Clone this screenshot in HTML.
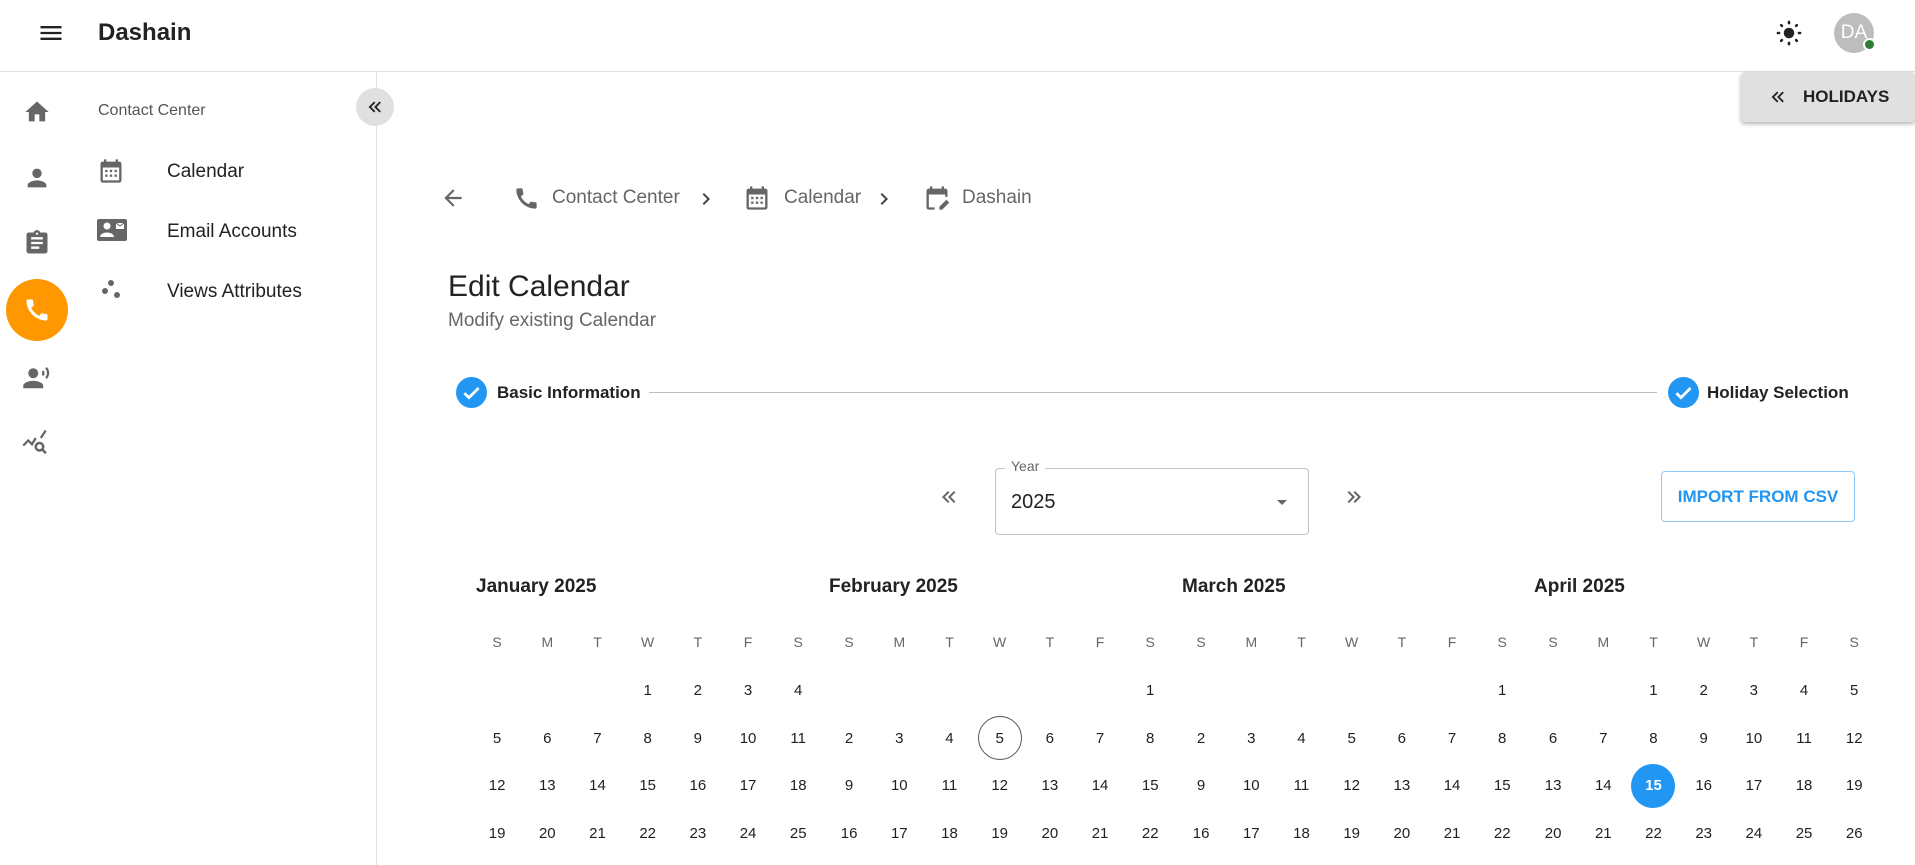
<!DOCTYPE html>
<html><head><meta charset="utf-8"><style>
*{box-sizing:border-box;margin:0;padding:0}
body{width:1915px;height:865px;overflow:hidden;background:#fff;font-family:"Liberation Sans",sans-serif;color:#212121;position:relative}
.a{position:absolute}
svg{display:block}
.cal{position:absolute;top:617px;width:352px;display:grid;grid-template-columns:repeat(7,50.2px);grid-template-rows:50px repeat(4,47.6px);font-size:15px;text-align:center}
.cal div{display:flex;align-items:center;justify-content:center}
.cal .h{color:#666;font-size:14px}
.mt{position:absolute;top:576px;font-size:19px;font-weight:bold;color:#222}
.sel span{width:44px;height:44px;border-radius:50%;background:#2196f3;color:#fff;font-weight:bold;display:flex;align-items:center;justify-content:center}
.today span{width:44px;height:44px;border-radius:50%;border:1px solid #555;display:flex;align-items:center;justify-content:center}
</style></head><body>
<div class="a" style="left:0;top:71px;width:1915px;height:1px;background:#e0e0e0"></div>
<svg class="a" style="left:37px;top:19px" width="28" height="28" viewBox="0 0 24 24"><path d="M3 18h18v-2H3v2zm0-5h18v-2H3v2zm0-7v2h18V6H3z" fill="#222"/></svg>
<div class="a" style="left:98px;top:19px;font-size:24px;font-weight:bold;color:#222">Dashain</div>
<svg class="a" style="left:1775px;top:19px" width="28" height="28" viewBox="0 0 24 24"><circle cx="12" cy="12" r="4.5" fill="#222"/><g stroke="#222" stroke-width="2.2" stroke-linecap="round"><path d="M12 2.5v1M12 20.5v1M2.5 12h1M20.5 12h1M5.3 5.3l.6.6M18.1 18.1l.6.6M5.3 18.7l.6-.6M18.1 5.9l.6-.6"/></g></svg>
<div class="a" style="left:1834px;top:13px;width:40px;height:40px;border-radius:50%;background:#bdbdbd;color:#fff;font-size:19px;display:flex;align-items:center;justify-content:center">DA</div>
<div class="a" style="left:1863px;top:38px;width:13px;height:13px;border-radius:50%;background:#2e7d32;border:2px solid #fff"></div>
<div class="a" style="left:1741px;top:72px;width:174px;height:50px;background:#e0e0e0;border-radius:4px;box-shadow:0 2px 4px rgba(0,0,0,.3);display:flex;align-items:center"><svg style="margin-left:26px" width="22" height="22" viewBox="0 0 24 24"><path d="M18.41 16.59L13.82 12l4.59-4.59L17 6l-6 6 6 6zM11 18l1.41-1.41L7.83 12l4.58-4.59L11 6l-6 6z" fill="#222"/></svg><span style="margin-left:14px;font-size:17px;font-weight:bold;color:#222">HOLIDAYS</span></div>
<svg class="a" style="left:23px;top:98px" width="28" height="28" viewBox="0 0 24 24"><path d="M10 20v-6h4v6h5v-8h3L12 3 2 12h3v8z" fill="#666"/></svg>
<svg class="a" style="left:23px;top:164px" width="28" height="28" viewBox="0 0 24 24"><path d="M12 12c2.21 0 4-1.79 4-4s-1.79-4-4-4-4 1.79-4 4 1.79 4 4 4zm0 2c-2.67 0-8 1.34-8 4v2h16v-2c0-2.66-5.33-4-8-4z" fill="#666"/></svg>
<svg class="a" style="left:23px;top:229px" width="28" height="28" viewBox="0 0 24 24"><path d="M19 3h-4.18C14.4 1.84 13.3 1 12 1c-1.3 0-2.4.84-2.82 2H5c-1.1 0-2 .9-2 2v14c0 1.1.9 2 2 2h14c1.1 0 2-.9 2-2V5c0-1.1-.9-2-2-2zm-7 0c.55 0 1 .45 1 1s-.45 1-1 1-1-.45-1-1 .45-1 1-1zm2 14H7v-2h7v2zm3-4H7v-2h10v2zm0-4H7V7h10v2z" fill="#666"/></svg>
<div class="a" style="left:6px;top:279px;width:62px;height:62px;border-radius:50%;background:#ff9800"></div>
<svg class="a" style="left:23px;top:296px" width="28" height="28" viewBox="0 0 24 24"><path d="M20.01 15.38c-1.23 0-2.42-.2-3.53-.56-.35-.12-.74-.03-1.01.24l-1.57 1.97c-2.83-1.35-5.48-3.9-6.89-6.83l1.95-1.66c.27-.28.35-.67.24-1.02-.37-1.11-.56-2.3-.56-3.53 0-.54-.45-.99-.99-.99H4.19C3.65 3 3 3.24 3 3.99 3 13.28 10.73 21 20.01 21c.71 0 .99-.63.99-1.18v-3.45c0-.54-.45-.99-.99-.99z" fill="#fff"/></svg>
<svg class="a" style="left:22px;top:362px" width="30" height="30" viewBox="0 0 24 24"><circle cx="9" cy="9" r="4" fill="#666"/><path d="M9 15c-2.67 0-8 1.34-8 4v2h16v-2c0-2.66-5.33-4-8-4z" fill="#666"/><path d="M16.5 7.2c.8 1.1.8 2.5 0 3.6M19.2 4.6c2.2 2.4 2.2 6 0 8.3" stroke="#666" stroke-width="1.8" fill="none"/></svg>
<svg class="a" style="left:22px;top:428px" width="30" height="30" viewBox="0 0 24 24"><path d="M1 14l4-4 3 3 3-5M15 8l4-6" stroke="#666" stroke-width="1.8" fill="none"/><circle cx="14" cy="15" r="3" stroke="#666" stroke-width="2" fill="none"/><path d="M16.2 17.2l3 3" stroke="#666" stroke-width="2"/></svg>
<div class="a" style="left:376px;top:72px;width:1px;height:793px;background:#e0e0e0"></div>
<div class="a" style="left:356px;top:88px;width:38px;height:38px;border-radius:50%;background:#e0e0e0;display:flex;align-items:center;justify-content:center"><svg width="22" height="22" viewBox="0 0 24 24"><path d="M18.41 16.59L13.82 12l4.59-4.59L17 6l-6 6 6 6zM11 18l1.41-1.41L7.83 12l4.58-4.59L11 6l-6 6z" fill="#222"/></svg></div>
<div class="a" style="left:98px;top:102px;font-size:16px;color:#555">Contact Center</div>
<svg class="a" style="left:97px;top:157px" width="28" height="28" viewBox="0 0 24 24"><path d="M19 4h-1V2h-2v2H8V2H6v2H5c-1.1 0-2 .9-2 2v14c0 1.1.9 2 2 2h14c1.1 0 2-.9 2-2V6c0-1.1-.9-2-2-2zm0 16H5V9h14v11z" fill="#666"/><g fill="#666"><rect x="7" y="11" width="2" height="2"/><rect x="11" y="11" width="2" height="2"/><rect x="15" y="11" width="2" height="2"/><rect x="7" y="15" width="2" height="2"/><rect x="11" y="15" width="2" height="2"/><rect x="15" y="15" width="2" height="2"/></g></svg>
<div class="a" style="left:167px;top:161px;font-size:19px;color:#222">Calendar</div>
<svg class="a" style="left:96px;top:216px" width="32" height="28" viewBox="0 0 32 24"><rect x="1" y="1" width="30" height="22" rx="2" fill="#666"/><circle cx="11" cy="8" r="3.5" fill="#fff"/><path d="M4 19c0-3 4-4.5 7-4.5s7 1.5 7 4.5z" fill="#fff"/><rect x="20" y="5" width="8" height="6" fill="#fff"/><path d="M20 5l4 3 4-3" stroke="#666" fill="none"/></svg>
<div class="a" style="left:167px;top:221px;font-size:19px;color:#222">Email Accounts</div>
<svg class="a" style="left:100px;top:279px" width="24" height="24" viewBox="0 0 24 24"><circle cx="11" cy="4" r="3" fill="#666"/><circle cx="5" cy="12" r="3" fill="#666"/><circle cx="17" cy="16" r="3" fill="#666"/></svg>
<div class="a" style="left:167px;top:281px;font-size:19px;color:#222">Views Attributes</div>
<svg class="a" style="left:440px;top:185px" width="26" height="26" viewBox="0 0 24 24"><path d="M20 11H7.83l5.59-5.59L12 4l-8 8 8 8 1.41-1.41L7.83 13H20v-2z" fill="#666"/></svg>
<svg class="a" style="left:513px;top:185px" width="27" height="27" viewBox="0 0 24 24"><path d="M20.01 15.38c-1.23 0-2.42-.2-3.53-.56-.35-.12-.74-.03-1.01.24l-1.57 1.97c-2.83-1.35-5.48-3.9-6.89-6.83l1.95-1.66c.27-.28.35-.67.24-1.02-.37-1.11-.56-2.3-.56-3.53 0-.54-.45-.99-.99-.99H4.19C3.65 3 3 3.24 3 3.99 3 13.28 10.73 21 20.01 21c.71 0 .99-.63.99-1.18v-3.45c0-.54-.45-.99-.99-.99z" fill="#666"/></svg>
<div class="a" style="left:552px;top:187px;font-size:19px;color:#666">Contact Center</div>
<svg class="a" style="left:694px;top:187px" width="24" height="24" viewBox="0 0 24 24"><path d="M10 6L8.59 7.41 13.17 12l-4.58 4.59L10 18l6-6z" fill="#444"/></svg>
<svg class="a" style="left:743px;top:184px" width="28" height="28" viewBox="0 0 24 24"><path d="M19 4h-1V2h-2v2H8V2H6v2H5c-1.1 0-2 .9-2 2v14c0 1.1.9 2 2 2h14c1.1 0 2-.9 2-2V6c0-1.1-.9-2-2-2zm0 16H5V9h14v11z" fill="#666"/><g fill="#666"><rect x="7" y="11" width="2" height="2"/><rect x="11" y="11" width="2" height="2"/><rect x="15" y="11" width="2" height="2"/><rect x="7" y="15" width="2" height="2"/><rect x="11" y="15" width="2" height="2"/><rect x="15" y="15" width="2" height="2"/></g></svg>
<div class="a" style="left:784px;top:187px;font-size:19px;color:#666">Calendar</div>
<svg class="a" style="left:872px;top:187px" width="24" height="24" viewBox="0 0 24 24"><path d="M10 6L8.59 7.41 13.17 12l-4.58 4.59L10 18l6-6z" fill="#444"/></svg>
<svg class="a" style="left:923px;top:184px" width="28" height="28" viewBox="0 0 24 24"><path d="M5 22c-1.1 0-2-.9-2-2V6c0-1.1.9-2 2-2h1V2h2v2h8V2h2v2h1c1.1 0 2 .9 2 2v5h-2V9H5v11h5v2z" fill="#666"/><path d="M14 22v-2.5l6-6 2.5 2.5-6 6z" fill="#666"/></svg>
<div class="a" style="left:962px;top:187px;font-size:19px;color:#666">Dashain</div>
<div class="a" style="left:448px;top:270px;font-size:30px;color:#222">Edit Calendar</div>
<div class="a" style="left:448px;top:310px;font-size:19px;color:#666">Modify existing Calendar</div>
<svg class="a" style="left:456px;top:377px" width="31" height="31" viewBox="0 0 24 24"><circle cx="12" cy="12" r="12" fill="#2196f3"/><path d="M6.5 12.5l3.5 3.5 7.5-7.5" stroke="#fff" stroke-width="2.2" fill="none"/></svg>
<div class="a" style="left:497px;top:383px;font-size:17px;font-weight:bold;color:#222">Basic Information</div>
<div class="a" style="left:649px;top:392px;width:1008px;height:1px;background:#bdbdbd"></div>
<svg class="a" style="left:1668px;top:377px" width="31" height="31" viewBox="0 0 24 24"><circle cx="12" cy="12" r="12" fill="#2196f3"/><path d="M6.5 12.5l3.5 3.5 7.5-7.5" stroke="#fff" stroke-width="2.2" fill="none"/></svg>
<div class="a" style="left:1707px;top:383px;font-size:17px;font-weight:bold;color:#222">Holiday Selection</div>
<svg class="a" style="left:937px;top:485px" width="24" height="24" viewBox="0 0 24 24"><path d="M18.41 16.59L13.82 12l4.59-4.59L17 6l-6 6 6 6zM11 18l1.41-1.41L7.83 12l4.58-4.59L11 6l-6 6z" fill="#666"/></svg>
<div class="a" style="left:995px;top:468px;width:314px;height:67px;border:1px solid #c4c4c4;border-radius:4px"></div>
<div class="a" style="left:1005px;top:458px;padding:0 6px;background:#fff;font-size:14px;color:#666">Year</div>
<div class="a" style="left:1011px;top:491px;font-size:20px;color:#222">2025</div>
<svg class="a" style="left:1270px;top:490px" width="24" height="24" viewBox="0 0 24 24"><path d="M7 10l5 5 5-5z" fill="#666"/></svg>
<svg class="a" style="left:1342px;top:485px" width="24" height="24" viewBox="0 0 24 24"><path d="M5.59 7.41L10.18 12l-4.59 4.59L7 18l6-6-6-6zM13 6l-1.41 1.41L16.17 12l-4.58 4.59L13 18l6-6z" fill="#666"/></svg>
<div class="a" style="left:1661px;top:471px;width:194px;height:51px;border:1px solid #90caf9;border-radius:4px;display:flex;align-items:center;justify-content:center;color:#2196f3;font-size:17px;font-weight:bold">IMPORT FROM CSV</div>
<div class="mt" style="left:476px">January 2025</div>
<div class="mt" style="left:829px">February 2025</div>
<div class="mt" style="left:1182px">March 2025</div>
<div class="mt" style="left:1534px">April 2025</div>
<div class="cal" style="left:472px">
<div class="h">S</div><div class="h">M</div><div class="h">T</div><div class="h">W</div><div class="h">T</div><div class="h">F</div><div class="h">S</div>
<div></div><div></div><div></div><div>1</div><div>2</div><div>3</div><div>4</div>
<div>5</div><div>6</div><div>7</div><div>8</div><div>9</div><div>10</div><div>11</div>
<div>12</div><div>13</div><div>14</div><div>15</div><div>16</div><div>17</div><div>18</div>
<div>19</div><div>20</div><div>21</div><div>22</div><div>23</div><div>24</div><div>25</div>
</div>
<div class="cal" style="left:824px">
<div class="h">S</div><div class="h">M</div><div class="h">T</div><div class="h">W</div><div class="h">T</div><div class="h">F</div><div class="h">S</div>
<div></div><div></div><div></div><div></div><div></div><div></div><div>1</div>
<div>2</div><div>3</div><div>4</div><div class="today"><span>5</span></div><div>6</div><div>7</div><div>8</div>
<div>9</div><div>10</div><div>11</div><div>12</div><div>13</div><div>14</div><div>15</div>
<div>16</div><div>17</div><div>18</div><div>19</div><div>20</div><div>21</div><div>22</div>
</div>
<div class="cal" style="left:1176px">
<div class="h">S</div><div class="h">M</div><div class="h">T</div><div class="h">W</div><div class="h">T</div><div class="h">F</div><div class="h">S</div>
<div></div><div></div><div></div><div></div><div></div><div></div><div>1</div>
<div>2</div><div>3</div><div>4</div><div>5</div><div>6</div><div>7</div><div>8</div>
<div>9</div><div>10</div><div>11</div><div>12</div><div>13</div><div>14</div><div>15</div>
<div>16</div><div>17</div><div>18</div><div>19</div><div>20</div><div>21</div><div>22</div>
</div>
<div class="cal" style="left:1528px">
<div class="h">S</div><div class="h">M</div><div class="h">T</div><div class="h">W</div><div class="h">T</div><div class="h">F</div><div class="h">S</div>
<div></div><div></div><div>1</div><div>2</div><div>3</div><div>4</div><div>5</div>
<div>6</div><div>7</div><div>8</div><div>9</div><div>10</div><div>11</div><div>12</div>
<div>13</div><div>14</div><div class="sel"><span>15</span></div><div>16</div><div>17</div><div>18</div><div>19</div>
<div>20</div><div>21</div><div>22</div><div>23</div><div>24</div><div>25</div><div>26</div>
</div>
</body></html>
